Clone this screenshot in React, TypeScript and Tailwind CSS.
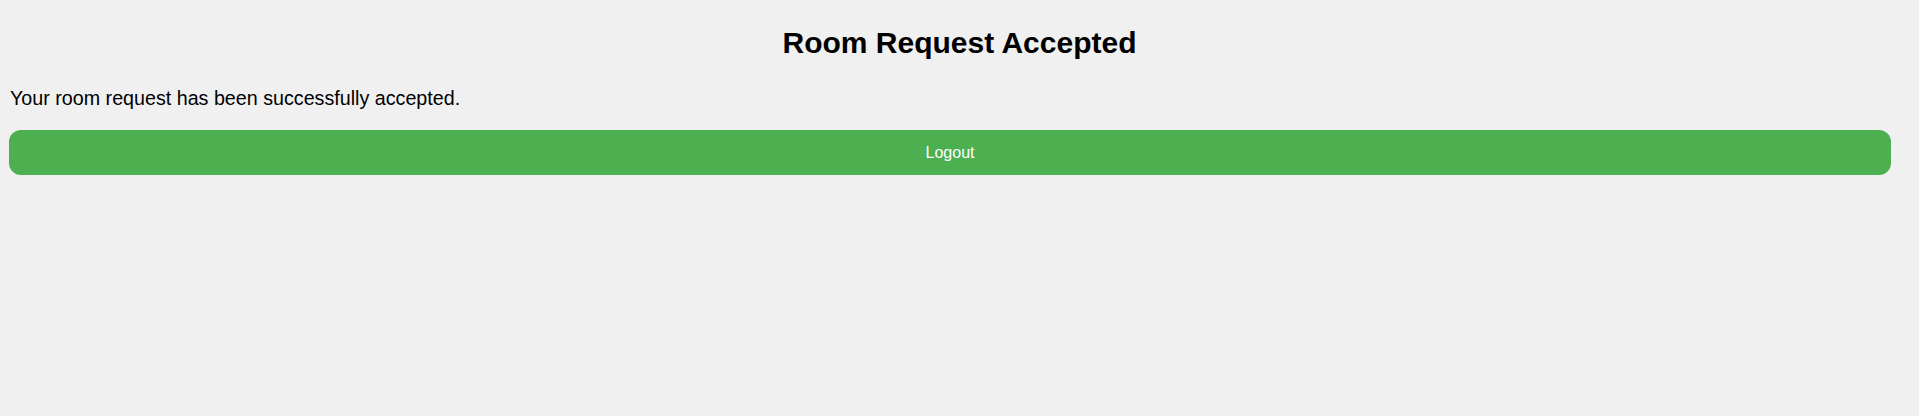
import React from 'react';

export default function App() {
  const handleLogout = () => {
    console.log('logout');
  };

  return (
    <div className="min-h-[416px] w-full bg-[#f0f0f0] text-black font-['Liberation_Sans',Arial,sans-serif]">
      <h1 className="pt-[25px] text-center text-[30px] leading-[35px] font-bold">Room Request Accepted</h1>
      <div className="px-[9px]">
        <p className="mt-[27px] pl-[1px] text-[19.7px] leading-[23px]">Your room request has been successfully accepted.</p>
        <button
          onClick={handleLogout}
          className="mt-[20px] block h-[45px] w-[1882px] rounded-[12px] bg-[#4caf50] text-[16px] leading-[18px] text-white"
        >
          Logout
        </button>
      </div>
    </div>
  );
}
